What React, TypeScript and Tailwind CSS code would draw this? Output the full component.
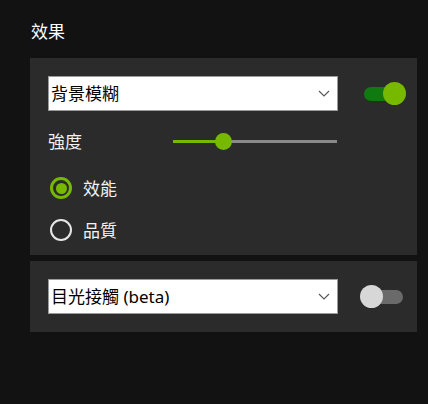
import React from 'react';

const font = { fontFamily: '"Noto Sans", "Noto Sans CJK TC", sans-serif' };

const Chevron: React.FC = () => (
  <svg width="12" height="7" viewBox="0 0 12 7" className="mr-[7px]">
    <path d="M1 1l5 5 5-5" fill="none" stroke="#555" strokeWidth="1.1" />
  </svg>
);

const Select: React.FC<{ label: string }> = ({ label }) => (
  <div className="flex items-center justify-between w-[290px] h-[35px] bg-white border border-[#9a9a9a] pl-[2px]">
    <span className="text-[17px] leading-none text-black">{label}</span>
    <Chevron />
  </div>
);

const Toggle: React.FC<{ on: boolean }> = ({ on }) =>
  on ? (
    <div className="relative w-[42px] h-[23px] flex items-center">
      <div className="w-[30px] h-[14px] rounded-full bg-[#0f7a0f]" />
      <div className="absolute right-0 top-0 w-[23px] h-[23px] rounded-full bg-[#76b900]" />
    </div>
  ) : (
    <div className="relative w-[43px] h-[23px] flex items-center justify-end">
      <div className="w-[30px] h-[14px] rounded-full bg-[#6a6a6a]" />
      <div className="absolute left-0 top-0 w-[23px] h-[23px] rounded-full bg-[#d7d7d7]" />
    </div>
  );

const Radio: React.FC<{ label: string; checked: boolean }> = ({ label, checked }) => (
  <div className="flex items-center h-[22px] pl-[20px]">
    {checked ? (
      <div className="w-[22px] h-[22px] rounded-full border-[3px] border-[#76b900] flex items-center justify-center">
        <div className="w-[11px] h-[11px] rounded-full bg-[#76b900]" />
      </div>
    ) : (
      <div className="w-[22px] h-[22px] rounded-full border-2 border-[#e6e6e6]" />
    )}
    <span className="ml-[11px] text-[17px] leading-none text-[#f2f2f2]">{label}</span>
  </div>
);

export default function App() {
  return (
    <div className="w-[428px] h-[404px] bg-[#121212] pt-[20px]" style={font}>
      <h2 className="pl-[31px] text-[17px] leading-[24px] text-white">效果</h2>

      <div className="mt-[14px] ml-[30px] w-[387px] h-[197px] bg-[#2b2b2b] pt-[18px]">
        <div className="flex items-center pl-[18px]">
          <Select label="背景模糊" />
          <div className="ml-[26px]">
            <Toggle on />
          </div>
        </div>

        <div className="flex items-center h-[24px] mt-[18px] pl-[18px]">
          <span className="w-[125px] text-[17px] leading-none text-[#f2f2f2]">強度</span>
          <div className="relative w-[164px] h-[3px] bg-[#8a8a8a]">
            <div className="h-[3px] w-[51px] bg-[#76b900]" />
            <div className="absolute left-[42px] top-[-7px] w-[17px] h-[17px] rounded-full bg-[#76b900]" />
          </div>
        </div>

        <div className="mt-[24px]">
          <Radio label="效能" checked />
        </div>
        <div className="mt-[20px]">
          <Radio label="品質" checked={false} />
        </div>
      </div>

      <div className="mt-[6px] ml-[30px] w-[387px] h-[71px] bg-[#2b2b2b] pt-[18px]">
        <div className="flex items-center pl-[18px]">
          <Select label="目光接觸 (beta)" />
          <div className="ml-[22px]">
            <Toggle on={false} />
          </div>
        </div>
      </div>
    </div>
  );
}
